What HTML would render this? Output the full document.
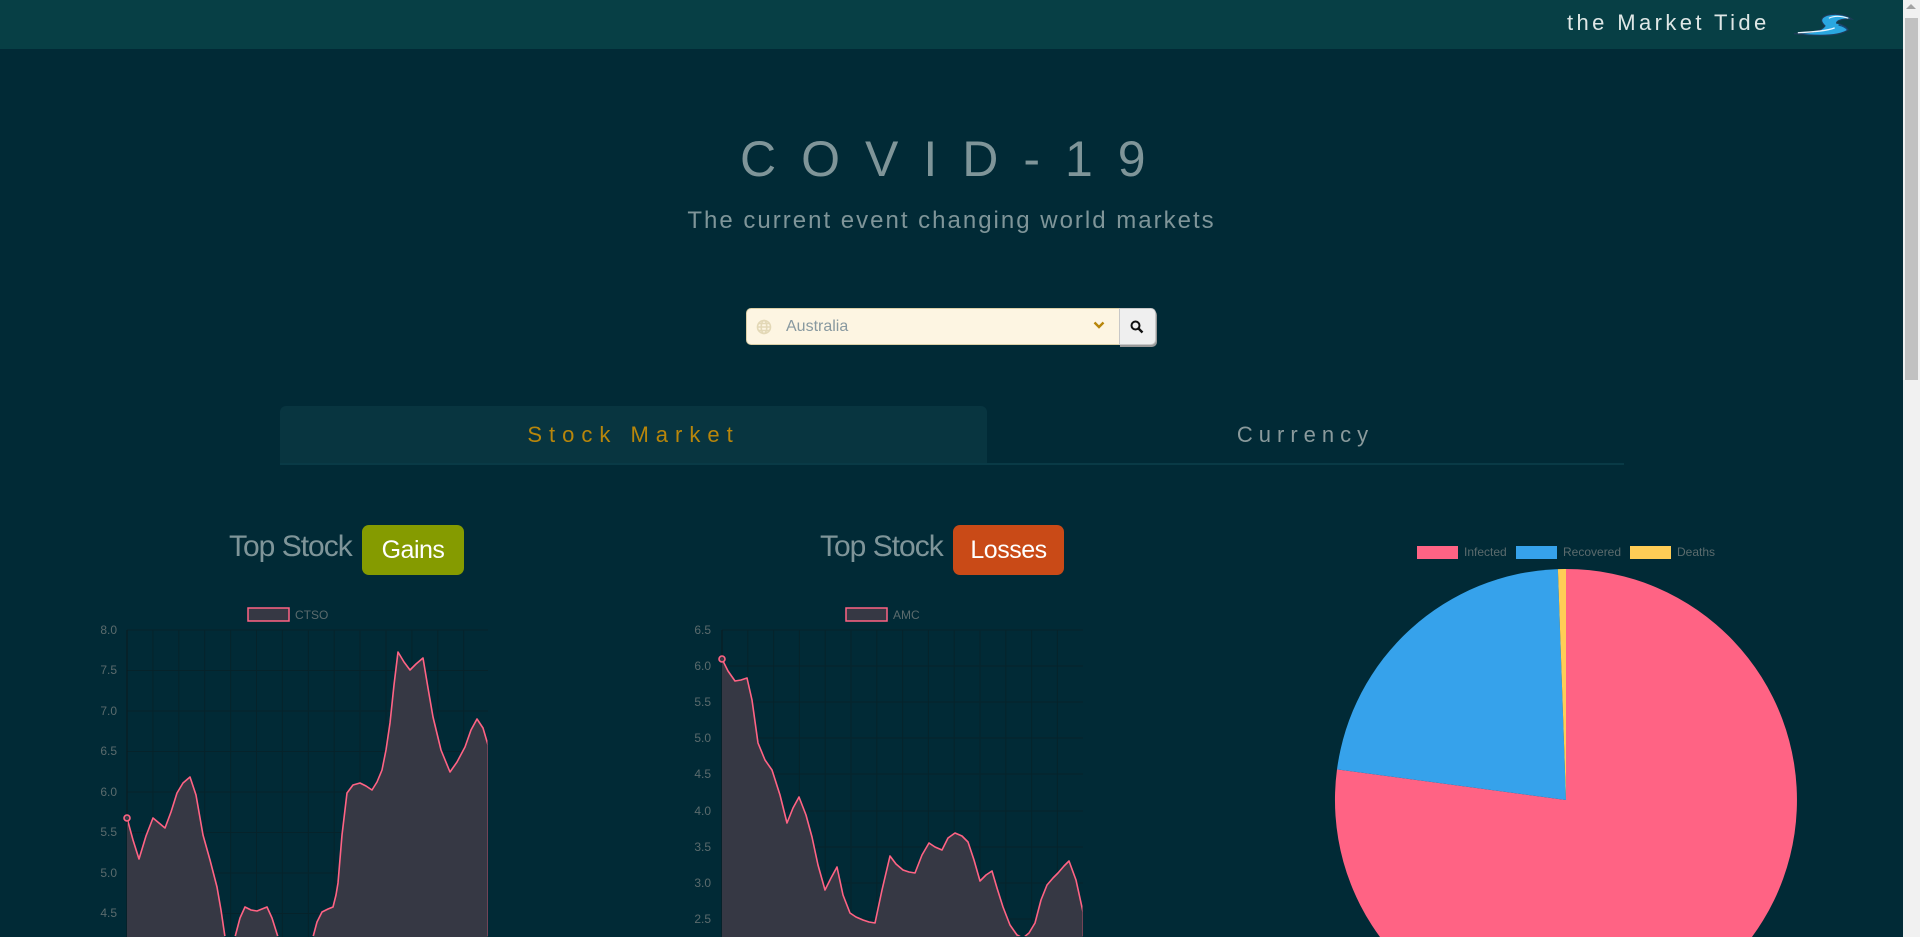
<!DOCTYPE html>
<html><head><meta charset="utf-8"><style>
*{margin:0;padding:0;box-sizing:border-box}
html,body{width:1920px;height:937px;overflow:hidden;background:#012a36;font-family:"Liberation Sans",sans-serif}
.abs{position:absolute;white-space:nowrap}
#nav{position:absolute;left:0;top:0;width:1903px;height:49px;background:#073f45}
#sb{position:absolute;left:1903px;top:0;width:17px;height:937px;background:#f1f1f1}
#thumb{position:absolute;left:1905px;top:18px;width:13px;height:362px;background:#c1c1c1}
</style></head><body>
<div id="nav"></div>
<div class="abs" style="left:1567px;top:10px;font-size:22px;letter-spacing:3.4px;color:#dfe7e6">the Market Tide</div>
<svg class="abs" style="left:1792px;top:11px" width="64" height="28" viewBox="0 0 66 26">
<path d="M2 22 C20 21 30 20 34 14 C30 10 28 6 36 3 C48 0 58 4 62 7 C54 6 46 8 46 11 C50 12 56 14 58 18 C50 24 30 25 2 22 Z" fill="#2aa7e0" stroke="#1d3b57" stroke-width="1.2"/>
<path d="M6 21 C24 20 36 19 44 16" stroke="#e8f6ff" stroke-width="1.4" fill="none"/>
<path d="M38 6 C44 3 52 4 58 6" stroke="#e8f6ff" stroke-width="1.2" fill="none"/>
<path d="M48 13 C52 14 56 16 57 18" stroke="#0f4d7a" stroke-width="1.2" fill="none"/>
</svg>
<div id="sb"></div><div id="thumb"></div>
<div class="abs" style="left:1906px;top:4px;width:0;height:0;border-left:5px solid transparent;border-right:5px solid transparent;border-bottom:5px solid #a3a3a3"></div>

<div class="abs" style="left:740px;top:130px;font-size:50px;letter-spacing:25px;color:#7f9599">COVID-19</div>
<div class="abs" style="left:0;width:1903px;text-align:center;top:207px;font-size:24px;letter-spacing:2px;color:#7f9599">The current event changing world markets</div>

<div class="abs" style="left:746px;top:308px;width:374px;height:37px;background:#fdf5e2;border:1px solid #dcd0a8;border-radius:5px 0 0 5px"></div>
<svg class="abs" style="left:756px;top:319px" width="16" height="16" viewBox="0 0 16 16"><g fill="none" stroke="#e3d8b6" stroke-width="1.6"><circle cx="8" cy="8" r="6.5"/><ellipse cx="8" cy="8" rx="2.8" ry="6.5"/><path d="M1.5 8h13M2.5 4.5h11M2.5 11.5h11"/></g></svg>
<div class="abs" style="left:786px;top:318px;font-size:16px;color:#8899a0">Australia</div>
<svg class="abs" style="left:1093px;top:320px" width="12" height="10" viewBox="0 0 12 10"><path d="M1.5 2.5 L6 7 L10.5 2.5" stroke="#b8860b" stroke-width="2.4" fill="none"/></svg>
<div class="abs" style="left:1119px;top:308px;width:37px;height:37px;background:#efefef;border:1px solid #c8c8c8;border-radius:0 5px 5px 0;box-shadow:1px 2px 0 #999"></div>
<svg class="abs" style="left:1130px;top:320px" width="14" height="14" viewBox="0 0 14 14"><circle cx="5.5" cy="5.5" r="4" stroke="#111" stroke-width="2" fill="none"/><path d="M8.5 8.5 L12.5 12.5" stroke="#111" stroke-width="2.4"/></svg>

<div class="abs" style="left:280px;top:406px;width:707px;height:58px;background:#083540;border-radius:6px 6px 0 0"></div>
<div class="abs" style="left:280px;top:463px;width:1344px;height:2px;background:#093a46"></div>
<div class="abs" style="left:280px;width:707px;text-align:center;top:422px;font-size:22px;letter-spacing:7px;color:#b8860b">Stock Market</div>
<div class="abs" style="left:987px;width:637px;text-align:center;top:422px;font-size:22px;letter-spacing:6px;color:#8a9a9c">Currency</div>

<div class="abs" style="left:229px;top:530px;font-size:30px;letter-spacing:-1px;color:#7f9599">Top Stock</div>
<div class="abs" style="left:362px;top:525px;width:102px;height:50px;background:#859b00;border-radius:7px;color:#fff;font-size:25px;text-align:center;line-height:50px;letter-spacing:-0.5px">Gains</div>
<div class="abs" style="left:820px;top:530px;font-size:30px;letter-spacing:-1px;color:#7f9599">Top Stock</div>
<div class="abs" style="left:953px;top:525px;width:111px;height:50px;background:#c94a17;border-radius:7px;color:#fff;font-size:25px;text-align:center;line-height:50px;letter-spacing:-0.5px">Losses</div>

<svg class="abs" style="left:0;top:0" width="1903" height="937" viewBox="0 0 1903 937">
<defs>
<clipPath id="c1"><rect x="128" y="600" width="359.5" height="336"/></clipPath>
<clipPath id="c2"><rect x="723" y="600" width="359.5" height="336"/></clipPath>
<path id="p1" d="M127 937V818 L133 840 L139 859 L146 836 L153 818 L159 823 L165 828 L171 812 L177 793 L183 783 L190 777 L196 795 L203 835 L210 860 L217 887 L221 910 L225 937Z"/>
<path id="p2" d="M235 937 L240 918 L245 907 L251 910 L257 911 L262 909 L267 907 L272 918 L278 937Z"/>
<path id="p3" d="M313 937 L317 922 L322 912 L328 909 L333 907 L336 895 L338 883 L342 835 L347 793 L353 785 L360 783 L366 786 L372 790 L377 782 L382 770 L386 750 L390 723 L394 685 L398 652 L404 662 L410 670 L416 664 L423 658 L428 688 L433 717 L441 750 L450 772 L457 762 L465 747 L471 730 L477 719 L483 728 L488 745 V937Z"/>
<path id="p4" d="M722 937V659 L728 671 L735 681 L741 680 L747 678 L752 700 L758 743 L765 760 L772 770 L780 795 L787 823 L793 808 L799 797 L806 815 L812 837 L818 865 L825 890 L831 878 L837 867 L843 895 L850 913 L856 917 L863 920 L869 922 L875 923 L882 890 L890 856 L896 864 L903 870 L909 872 L915 873 L922 855 L929 843 L935 847 L942 850 L948 838 L955 833 L962 836 L968 842 L974 860 L980 881 L986 875 L992 871 L997 888 L1003 907 L1010 925 L1017 935 L1023 938 L1029 933 L1035 923 L1041 900 L1047 885 L1053 878 L1058 873 L1064 866 L1069 861 L1076 880 L1083 912 V937Z"/>
</defs>
<g stroke="#06232b" stroke-width="1">
<path d="M127 630H488M127 670.5H488M127 711H488M127 751.5H488M127 792H488M127 832.5H488M127 873H488M127 913.5H488"/>
<path d="M152.9 630V937M178.8 630V937M204.7 630V937M230.6 630V937M256.5 630V937M282.4 630V937M308.3 630V937M334.2 630V937M360 630V937M386 630V937M411.9 630V937M437.8 630V937M463.7 630V937"/>
<path d="M722 630H1083M722 666H1083M722 702H1083M722 738H1083M722 774H1083M722 811H1083M722 847H1083M722 883H1083M722 919H1083"/>
<path d="M747.8 630V937M773.6 630V937M799.4 630V937M825.2 630V937M851 630V937M876.8 630V937M902.6 630V937M928.4 630V937M954.2 630V937M980 630V937M1005.8 630V937M1031.6 630V937M1057.4 630V937"/>
</g>
<path d="M127 630V937M722 630V937" stroke="#0a1a1f" stroke-width="1"/>
<g font-family="Liberation Sans,sans-serif" font-size="12" fill="#5b6b6d" text-anchor="end">
<text x="117" y="634">8.0</text><text x="117" y="674">7.5</text><text x="117" y="715">7.0</text><text x="117" y="755">6.5</text><text x="117" y="796">6.0</text><text x="117" y="836">5.5</text><text x="117" y="877">5.0</text><text x="117" y="917">4.5</text>
<text x="711" y="634">6.5</text><text x="711" y="670">6.0</text><text x="711" y="706">5.5</text><text x="711" y="742">5.0</text><text x="711" y="778">4.5</text><text x="711" y="815">4.0</text><text x="711" y="851">3.5</text><text x="711" y="887">3.0</text><text x="711" y="923">2.5</text>
</g>
<g fill="#363844"><use href="#p1"/><use href="#p2"/><use href="#p3"/><use href="#p4"/></g>
<g fill="none" stroke="#ff6384" stroke-width="1.6" stroke-linejoin="round">
<g clip-path="url(#c1)"><use href="#p1"/><use href="#p2"/><use href="#p3"/></g>
<g clip-path="url(#c2)"><use href="#p4"/></g>
</g>
<circle cx="127" cy="818" r="3" fill="#363844" stroke="#ff6384" stroke-width="1.6"/>
<circle cx="722" cy="659" r="3" fill="#363844" stroke="#ff6384" stroke-width="1.6"/>
<rect x="248" y="608" width="41" height="13" fill="#363844" stroke="#ff6384" stroke-width="1.5"/>
<rect x="846" y="608" width="41" height="13" fill="#363844" stroke="#ff6384" stroke-width="1.5"/>
<g font-family="Liberation Sans,sans-serif" font-size="12" fill="#5b6b6d">
<text x="295" y="619">CTSO</text><text x="893" y="619">AMC</text>
<text x="1464" y="556">Infected</text><text x="1563" y="556">Recovered</text><text x="1677" y="556">Deaths</text>
</g>
<rect x="1417" y="546" width="41" height="13" fill="#ff6384"/>
<rect x="1516" y="546" width="41" height="13" fill="#36a2eb"/>
<rect x="1630" y="546" width="41" height="13" fill="#ffcd56"/>
<path d="M1566 800 L1566 569 A231 231 0 1 1 1337 769.4 Z" fill="#ff6384"/>
<path d="M1566 800 L1337 769.4 A231 231 0 0 1 1557.9 569.1 Z" fill="#36a2eb"/>
<path d="M1566 800 L1557.9 569.1 A231 231 0 0 1 1566 569 Z" fill="#ffcd56"/>
</svg>
</body></html>
